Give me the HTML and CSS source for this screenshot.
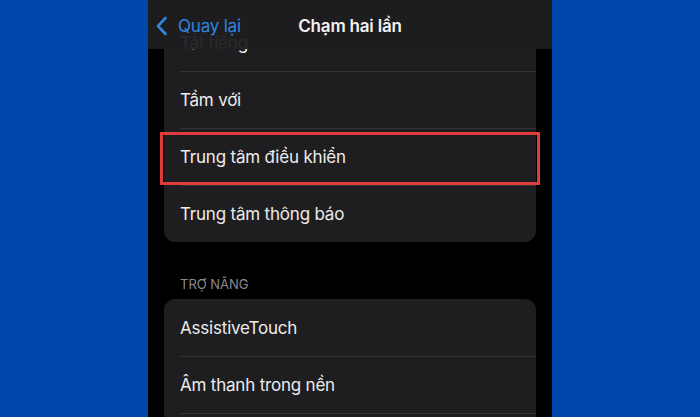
FILE: index.html
```html
<!DOCTYPE html>
<html lang="vi">
<head>
<meta charset="utf-8">
<link rel="stylesheet" href="styles.css">
</head>
<body>
<div class="stage">
  <div class="phone">
    <div class="navbar">
      <div class="back">
        <svg class="chev" width="13" height="20" viewBox="0 0 13 20"><path d="M10.5 2 L3 10 L10.5 18" fill="none" stroke="#2f86e0" stroke-width="2.6" stroke-linecap="round" stroke-linejoin="round"/></svg>
        <span class="back-text">Quay lại</span>
      </div>
      <div class="title">Chạm hai lần</div>
    </div>
    <div class="content">
      <div class="card first">
        <div class="row">Tắt tiếng</div>
        <div class="row">Tầm với</div>
        <div class="row highlighted">Trung tâm điều khiển</div>
        <div class="row">Trung tâm thông báo</div>
      </div>
      <div class="section-header">TRỢ NĂNG</div>
      <div class="card">
        <div class="row">AssistiveTouch</div>
        <div class="row">Âm thanh trong nền</div>
        <div class="row"></div>
      </div>
    </div>
  </div>
</div>
</body>
</html>
```

FILE: styles.css
```css
html, body {
  margin: 0;
  padding: 0;
  height: 100%;
}
body {
  background: #0047ab;
  font-family: Inter, "Liberation Sans", sans-serif;
  overflow: hidden;
}
.stage {
  display: flex;
  justify-content: center;
  height: 417px;
}
.phone {
  position: relative;
  width: 404px;
  height: 417px;
  background: #000;
  overflow: hidden;
}
.navbar {
  position: absolute;
  top: 0;
  left: 0;
  right: 0;
  height: 49px;
  background: rgba(30, 30, 31, 0.94);
  z-index: 2;
  display: flex;
  align-items: center;
  justify-content: center;
}
.back {
  position: absolute;
  left: 7px;
  top: 0;
  height: 52px;
  display: flex;
  align-items: center;
  gap: 10px;
}
.chev {
  display: block;
}
.back-text {
  color: #2f86e0;
  font-size: 17px;
  letter-spacing: -0.2px;
}
.title {
  color: #f2f2f2;
  font-size: 17px;
  font-weight: 600;
  letter-spacing: -0.2px;
  margin-top: 3px;
}
.content {
  padding: 14px 16px 0;
}
.card {
  background: #1e1e20;
  border-radius: 11px;
}
.row {
  position: relative;
  height: 57px;
  display: flex;
  align-items: center;
  padding-left: 16px;
  color: #ececec;
  font-size: 17px;
  letter-spacing: -0.2px;
}
.row + .row::before {
  content: "";
  position: absolute;
  top: 0;
  left: 16px;
  right: 0;
  height: 1px;
  background: #333335;
}
.highlighted::after {
  content: "";
  position: absolute;
  top: 4px;
  left: -4px;
  right: -4px;
  bottom: 0;
  border: 3px solid #e23b3b;
}
.section-header {
  color: #8a8a8e;
  font-size: 13px;
  padding: 34px 0 0 16px;
  height: 23px;
}
```
